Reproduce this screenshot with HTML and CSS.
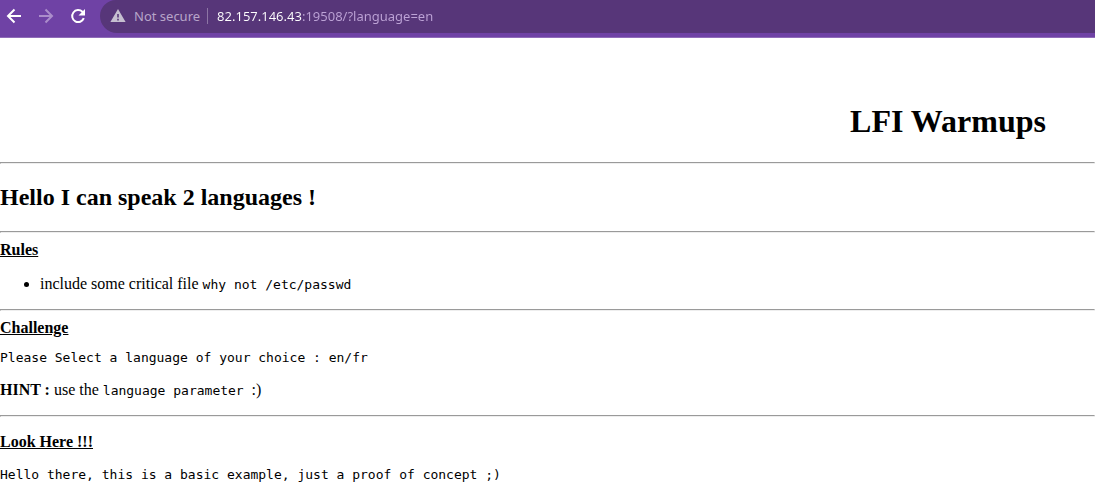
FILE: index.html
```html
<!DOCTYPE html>
<html lang="en">
<head>
<meta charset="utf-8">
<meta name="viewport" content="width=device-width, initial-scale=1">
<title>LFI Warmups</title>
<link rel="stylesheet" href="styles.css">
</head>
<body>
<header class="toolbar">
  <nav class="nav" aria-label="History">
    <button class="nav-button" type="button" aria-label="Back">
      <svg viewBox="0 0 16 16" width="16" height="16"><path d="M15 8H2.5M8.5 1.5 2 8 8.5 14.5"/></svg>
    </button>
    <button class="nav-button nav-button-off" type="button" aria-label="Forward" disabled>
      <svg viewBox="0 0 16 16" width="16" height="16"><path d="M1 8h12.5M7.5 1.5 14 8 7.5 14.5"/></svg>
    </button>
    <button class="nav-button" type="button" aria-label="Reload">
      <svg viewBox="0 0 16 16" width="16" height="16"><path d="M13.8 10.2A6 6 0 1 1 12.4 3.8L14 5.4"/><path class="solid" d="M15 1v6.5H8.5z"/></svg>
    </button>
  </nav>
  <form class="address">
    <svg class="warning" viewBox="0 0 16 14" width="16" height="14" aria-hidden="true"><path fill-rule="evenodd" d="M8 0l7.6 13H.4zM7.2 5v3.4h1.6V5zM7.2 9.8v1.6h1.6V9.8z"/></svg>
    <label class="status" for="url">Not secure</label>
    <input class="url" id="url" type="text" value="82.157.146.43:19508/?language=en" spellcheck="false">
  </form>
</header>
<main>
  <h1 class="title">LFI Warmups</h1>
  <hr class="rule">
  <h2 class="greeting">Hello I can speak 2 languages !</h2>
  <hr class="rule">
  <section>
    <h3 class="label">Rules</h3>
    <ul class="list">
      <li>include some critical file <code class="code">why not /etc/passwd</code></li>
    </ul>
  </section>
  <hr class="rule">
  <section>
    <h3 class="label">Challenge</h3>
    <pre class="code prompt">Please Select a language of your choice : en/fr</pre>
    <p class="hint"><b>HINT :</b> use the <code class="code">language parameter </code>:)</p>
  </section>
  <hr class="rule">
  <section class="result">
    <h3 class="label">Look Here !!!</h3>
    <pre class="code output">Hello there, this is a basic example, just a proof of concept ;)</pre>
  </section>
</main>
</body>
</html>
```

FILE: styles.css
```css
body {
  margin: 0;
  background: #fff;
  color: #000;
  font: 16px/18px "Liberation Serif", "Times New Roman", serif;
}

.toolbar {
  display: flex;
  align-items: flex-start;
  height: 37px;
  background: #6f42a5;
  border-bottom: 1px solid #8f6cb8;
  font-family: "Noto Sans", sans-serif;
}

.nav {
  display: flex;
  gap: 16px;
  padding: 8px 14px 0 6px;
}

.nav-button {
  display: flex;
  padding: 0;
  border: 0;
  background: none;
  color: #fff;
}

.nav-button-off {
  color: #ab8dcb;
}

.nav-button path {
  fill: none;
  stroke: currentColor;
  stroke-width: 2;
}

.nav-button .solid {
  fill: currentColor;
  stroke: none;
}

.address {
  display: flex;
  flex: 1;
  align-items: center;
  box-sizing: border-box;
  height: 33px;
  padding: 0 0 2px 10px;
  border-radius: 0 0 0 17px;
  border-top-left-radius: 16px;
  background: #573679;
}

.warning {
  fill: #c6bfd0;
}

.status {
  margin-left: 8px;
  padding-right: 7px;
  border-right: 1px solid #8d75a5;
  color: #b7a5c9;
  font-size: 13px;
  line-height: 16px;
}

.url {
  flex: 1;
  min-width: 0;
  height: 20px;
  margin-left: 9px;
  padding: 0;
  border: 0;
  outline: 0;
  background: linear-gradient(to right, #fff 86px, #bda3d6 86px);
  background-clip: text;
  -webkit-background-clip: text;
  color: transparent;
  caret-color: #fff;
  font: 13px/20px "Noto Sans", sans-serif;
}

.title {
  margin: 65px 49px 22px;
  font-size: 32px;
  line-height: 37px;
  text-align: right;
}

.rule {
  margin: 8px 0;
}

.greeting {
  margin: 20px 0;
  font-size: 24px;
  line-height: 27px;
}

.label {
  margin: 0;
  font-size: 16px;
  text-decoration: underline;
}

.list {
  margin: 16px 0;
  padding-left: 40px;
}

.code {
  font-family: "DejaVu Sans Mono", monospace;
  font-size: 13px;
  line-height: 15px;
}

.prompt {
  margin: 13px 0 16px;
}

.hint {
  margin: 16px 0;
}

.result {
  margin-top: 16px;
}

.output {
  margin: 16px 0;
}
```
